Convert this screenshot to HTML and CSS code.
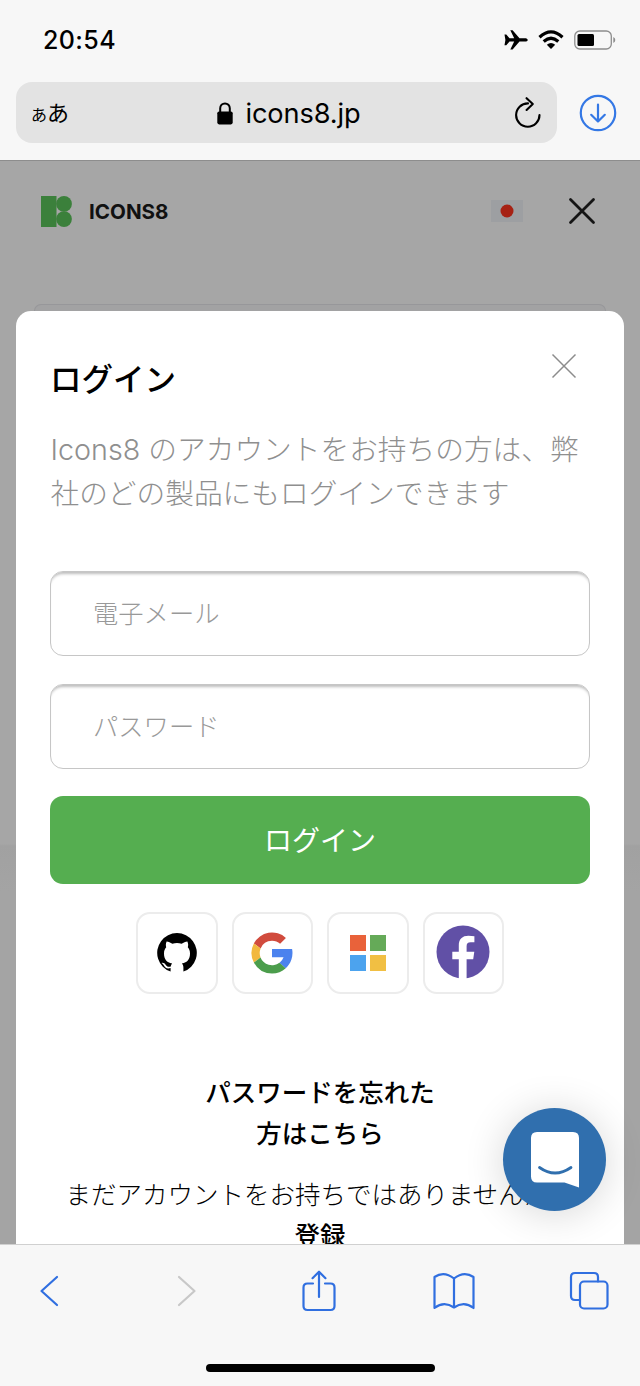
FILE: index.html
```html
<!DOCTYPE html>
<html lang="ja">
<head>
<meta charset="utf-8">
<title>ログイン - Icons8</title>
<link rel="stylesheet" href="styles.css">
</head>
<body>
<div class="phone">
  <header class="browser-top">
    <div class="status">
      <span class="clock">20:54</span>
      <div class="status-icons">
        <svg class="plane" width="24" height="22" viewBox="0 0 24 22"><path d="M.5 5.5h1.8l3.2 3.7h4.7L6.3 1.2h2.3L15.5 9.2h5.3c1.7 0 2.9.7 2.9 1.7s-1.2 1.7-2.9 1.7h-5.3L8.6 20.6H6.3l3.9-8H5.5l-3.2 3.7H.5l.9-5.4z"/></svg>
        <svg class="wifi" width="26" height="20" viewBox="0 0 26 20"><path d="M1.500 7.200Q13-3.400 24.500 7.200M5.700 11.500Q13 5 20.300 11.500" fill="none" stroke="#000" stroke-width="3.200"/><path d="M8.800 14.700Q13 11.200 17.200 14.700L13 19z"/></svg>
        <svg class="battery" width="42" height="20" viewBox="0 0 42 20"><rect x=".8" y="1" width="36.5" height="18" rx="5" fill="none" stroke="#8d8d8d" stroke-width="1.3"/><rect x="3.5" y="4" width="16.5" height="12" rx="1.5"/><path d="M39.3 7v6q2-1 2-3t-2-3z" fill="#8d8d8d"/></svg>
      </div>
    </div>
    <div class="address-row">
      <div class="address">
        <span class="reader"><small>あ</small>あ</span>
        <div class="site">
          <svg width="16" height="23" viewBox="0 0 16 23"><path d="M3.2 10V6.2a4.800 4.800 0 0 1 9.600 0V10" fill="none" stroke="#000" stroke-width="2"/><rect x=".3" y="9.4" width="15.4" height="13" rx="1.8"/></svg>
          <span>icons8.jp</span>
        </div>
        <svg class="reload" width="28" height="32" viewBox="0 0 28 32"><path d="M14 6.400A11.700 11.700 0 1 0 25.500 18M12.600 1.200l6.200 5.700-6.200 6" fill="none" stroke="#000" stroke-width="2.100" stroke-linecap="round" stroke-linejoin="round"/></svg>
      </div>
      <svg class="download" width="38" height="38" viewBox="0 0 38 38"><g fill="none" stroke="#3478e5" stroke-width="2.200" stroke-linecap="round" stroke-linejoin="round"><circle cx="19" cy="19" r="17.200"/><path d="M19 10.500v17M12.200 20.800l6.800 6.700 6.800-6.700"/></g></svg>
    </div>
  </header>

  <main class="page">
    <nav class="site-nav">
      <svg width="31" height="31" viewBox="0 0 31 31" fill="#3b803b"><path d="M0 0h15.500v31H0z"/><circle cx="23" cy="7.900" r="7.900"/><circle cx="23" cy="23.100" r="7.900"/></svg>
      <span class="brand">ICONS8</span>
      <svg class="flag" width="32" height="22" viewBox="0 0 32 22"><path fill="#9d9fa2" d="M0 0h32v22H0z"/><circle cx="16" cy="11" r="6.5" fill="#a62114"/></svg>
      <svg class="menu-close" width="28" height="28" viewBox="0 0 28 28"><path d="M2.500 2.500l23 23M25.500 2.500l-23 23" stroke="#151515" stroke-width="2.800" stroke-linecap="round"/></svg>
    </nav>
    <div class="field-behind"></div>

    <section class="modal">
      <div class="modal-head">
        <h1>ログイン</h1>
        <svg width="26" height="26" viewBox="0 0 26 26"><path d="M1.500 1.500l23 23M24.500 1.500l-23 23" stroke="#8c8c8c" stroke-width="1.500"/></svg>
      </div>
      <p class="intro">Icons8 のアカウントをお持ちの方は、弊<br>社のどの製品にもログインできます</p>
      <form class="login">
        <div class="input">電子メール</div>
        <div class="input">パスワード</div>
        <button type="button">ログイン</button>
      </form>
      <div class="socials">
        <a class="social"><svg width="40" height="40" viewBox="0 0 40 40"><path d="M13.6 38.6v-3.5c-3.8 1-5.6-.3-6.8-2.8-.5-1-1.3-1.8-2.2-2.4 2.4-.4 3.5 1.1 4.6 2.6 1.1 1.4 2.7 1.5 4.6.9.2-1.3.7-2.1 1.4-2.8C9.5 29.8 7 26 7 20.6c0-2.8.8-4.8 2.200-6.300-.6-2.100-.4-4.100.4-5.900 2 .1 3.800 1 5.800 2.300 3.100-.8 6.100-.8 9.200 0 2-1.300 3.800-2.200 5.800-2.300.8 1.800 1 3.800.4 5.900 1.400 1.500 2.200 3.500 2.200 6.300 0 5.400-2.500 9.200-8.200 10 1.100 1 1.600 2.300 1.600 4v4A19.800 19.800 0 1 0 13.600 38.600z"/></svg></a>
        <a class="social"><svg width="42" height="42" viewBox="3.5 3.5 41 41"><path fill="#4b82ee" d="M43.6 20.1H24v8h11.3a12 12 0 0 1-4.1 5.6l6.2 5.2C36.9 39.3 44 34 44 24c0-1.3-.1-2.6-.4-3.9z"/><path fill="#d14b3d" d="M6.3 14.7l6.6 4.8A12 12 0 0 1 24 12c3 0 5.8 1.1 7.9 3l5.7-5.7A20 20 0 0 0 6.3 14.7z"/><path fill="#f2b83e" d="M6.3 14.7a20 20 0 0 0 0 18.6l6.5-5a12 12 0 0 1 .1-8.8z"/><path fill="#4b9d4c" d="M24 44c5.2 0 9.9-2 13.4-5.2l-6.2-5.2A12 12 0 0 1 12.8 28.3l-6.5 5A20 20 0 0 0 24 44z"/></svg></a>
        <a class="social"><svg width="36" height="36" viewBox="0 0 36 36"><path fill="#e9623a" d="M0 0h16v16H0z"/><path fill="#65aa58" d="M20 0h16v16H20z"/><path fill="#4ca3ee" d="M0 20h16v16H0z"/><path fill="#f1bf43" d="M20 20h16v16H20z"/></svg></a>
        <a class="social facebook"><svg width="54" height="54" viewBox="0 0 54 54"><circle cx="27" cy="27" r="26.5" fill="#6150a6"/><path d="M22.800 54V34.200h-6.500v-7.500h6.500v-6.200c0-6.400 3.600-9.700 9.600-9.700 2.300 0 4.200.2 6 .5v6h-3.700c-3 0-4.100 1.500-4.100 4.100v5.300h7.700l-1.100 7.500h-6.600V54z" fill="#fff"/></svg></a>
      </div>
      <a class="forgot">パスワードを忘れた<br>方はこちら</a>
      <p class="signup">まだアカウントをお持ちではありませんか？<br><b>登録</b></p>
    </section>

    <button class="chat" type="button" aria-label="チャット"><svg width="50" height="56" viewBox="0 0 50 56"><path d="M7 0h36q6 0 6 6v49.500L34.500 50.500H7q-6 0-6-6V6q0-6 6-6z" fill="#fff"/><path d="M9.500 35.500q15.500 11 31.500 0" fill="none" stroke="#306fae" stroke-width="2.800" stroke-linecap="round"/></svg></button>
  </main>

  <footer class="browser-bottom">
    <div class="tools">
      <div class="tool"><svg width="20" height="34" viewBox="0 0 20 34"><path d="M18 3L2.500 17 18 31"/></svg></div>
      <div class="tool disabled"><svg width="20" height="34" viewBox="0 0 20 34"><path d="M2 3l15.500 14L2 31"/></svg></div>
      <div class="tool"><svg width="34" height="42" viewBox="0 0 34 42"><path d="M11 13.500H5.500q-4 0-4 4V36q0 4 4 4h23q4 0 4-4V17.500q0-4-4-4H23M17 27V2M10.500 8.200L17 1.700l6.500 6.500"/></svg></div>
      <div class="tool"><svg width="42" height="38" viewBox="0 0 42 38"><path d="M21 6.500V35M21 6.500Q11-1.500 1.500 5v31Q11 28.500 21 35.500q10-7 19.500.5V5Q31-1.500 21 6.500z"/></svg></div>
      <div class="tool"><svg width="40" height="39" viewBox="0 0 40 39"><rect x="11" y="10.500" width="27.500" height="27" rx="4"/><path d="M11 29H6q-4 0-4-4V6q0-4 4-4h19q4 0 4 4v4.500"/></svg></div>
    </div>
    <div class="home"></div>
  </footer>
</div>
</body>
</html>
```
FILE: styles.css
```css
* { box-sizing: border-box; }
body { margin: 0; font-family: Inter, "Noto Sans CJK JP", sans-serif; color: #000; }
svg { display: block; flex: none; }
button { border: 0; padding: 0; font: inherit; }
.phone { width: 640px; height: 1386px; overflow: hidden; display: flex; flex-direction: column; background: #f7f7f7; }

.browser-top { height: 161px; flex: none; border-bottom: 1px solid #8d8d8d; }
.status { height: 82px; padding: 0 24px 3px 43px; display: flex; align-items: center; justify-content: space-between; }
.clock { font-size: 25px; font-weight: 500; letter-spacing: .4px; }
.status-icons { display: flex; align-items: center; gap: 10px; }
.address-row { display: flex; align-items: center; gap: 22px; padding-left: 16px; }
.address { width: 541px; height: 61px; border-radius: 16px; background: #e3e3e3; display: flex; align-items: center; justify-content: space-between; padding: 0 15px; }
.reader { width: 70px; font-family: "Noto Sans CJK JP", sans-serif; font-size: 22px; line-height: 30px; }
.reader small { font-size: 16px; }
.site { display: flex; align-items: center; gap: 12px; font-size: 27.200px; letter-spacing: -.1px; padding: 1px 0 0 5px; }
.reload { margin: 1px 0 0 42px; }

.page { height: 1083px; flex: none; position: relative; overflow: hidden; background: linear-gradient(#a6a6a6 683px, #a1a1a1 685px, #a4a4a4 730px); }
.site-nav { display: flex; align-items: center; height: 100px; padding: 0 44px 0 41px; }
.brand { font-size: 20.600px; font-weight: 700; color: #111; margin-left: 17px; }
.flag { margin-left: auto; }
.menu-close { margin-left: 45px; }
.field-behind { margin: 43px 34px 0; height: 7px; border: 1.500px solid #97979a; border-bottom: 0; border-radius: 7px 7px 0 0; background: #a2a2a3; }

.modal { margin: 0 16px; height: 933px; padding: 0 34px; border-radius: 15px 15px 0 0; background: #fff; }
.modal-head { display: flex; justify-content: space-between; padding: 42px 13px 0 0; height: 112px; }
h1 { margin: 0; font-size: 31.500px; line-height: 54px; font-weight: 500; }
.intro { margin: 5px 0 0 .5px; font-size: 28.700px; line-height: 44px; font-weight: 300; color: #8f8f8f; white-space: nowrap; }
.login { margin-top: 55px; display: flex; flex-direction: column; gap: 27.500px; }
.input { height: 85px; border: 1.500px solid #c6c6c6; border-radius: 13px; box-shadow: inset 0 4px 3px -2px #bdbdbd; padding-left: 42px; font-size: 25.300px; line-height: 83px; font-weight: 300; color: #999; }
.login button { height: 88px; border-radius: 13px; background: #55ae50; color: #fff; font-size: 28px; font-weight: 400; padding-bottom: 3px; }
.socials { display: flex; justify-content: center; gap: 14px; margin-top: 28px; }
.social { width: 81.500px; height: 82px; border: 2px solid #ececec; border-radius: 14px; display: flex; align-items: center; justify-content: center; }
.facebook { padding-bottom: 2px; }
.forgot { display: block; margin-top: 78px; text-align: center; font-size: 25.500px; line-height: 41px; font-weight: 500; }
.signup { margin: 20px -20px 0; text-align: center; font-size: 25.500px; line-height: 41px; font-weight: 300; white-space: nowrap; }
.signup b { font-weight: 500; }
.chat { position: absolute; left: 503px; bottom: 33px; width: 103px; height: 103px; border-radius: 50%; background: #306fae; box-shadow: 0 3px 40px rgba(0,0,0,.16); display: flex; align-items: center; justify-content: center; }

.browser-bottom { flex: 1; border-top: 1px solid #d0d0d0; background: #f7f7f7; display: flex; flex-direction: column; align-items: center; }
.tools { width: 100%; height: 119px; padding: 0 30px 28px 28px; display: flex; align-items: center; justify-content: space-between; fill: none; stroke: #306fe0; stroke-width: 2.200; stroke-linecap: round; stroke-linejoin: round; }
.tool { width: 42px; display: flex; justify-content: center; }
.disabled { stroke: #c8c8c8; padding-left: 6px; }
.home { width: 229px; height: 8px; border-radius: 4px; background: #000; }
```
